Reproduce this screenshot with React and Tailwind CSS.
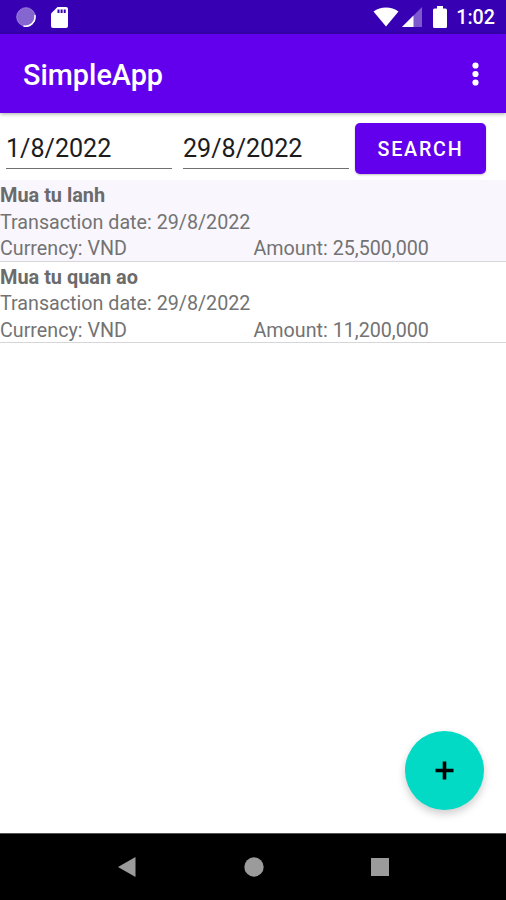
import React, { useState } from 'react';

const initialTransactions = [
  { id: 1, name: 'Mua tu lanh', date: '29/8/2022', currency: 'VND', amount: 25500000 },
  { id: 2, name: 'Mua tu quan ao', date: '29/8/2022', currency: 'VND', amount: 11200000 },
];

function StatusBar() {
  return (
    <div className="h-[34px] shrink-0 bg-[#3700b3] flex items-center justify-between pl-4 pr-[11px]">
      <div className="flex items-center">
        <svg width="20" height="20" viewBox="0 0 20 20">
          <circle cx="10" cy="10" r="9.3" fill="#8565d0" stroke="#a48bdd" strokeWidth=".8" />
          <path d="M18.8 8A9.3 9.3 0 0 1 7.5 19" fill="none" stroke="#fff" strokeWidth="1.5" />
        </svg>
        <svg className="ml-[15px]" width="17" height="21" viewBox="0 0 17 21">
          <path d="M6.5 0H15a2 2 0 0 1 2 2v17a2 2 0 0 1-2 2H2a2 2 0 0 1-2-2V6.5Z" fill="#fff" />
          <path d="M6.5 2.5h2V6h-2zM9.6 2.5h2V6h-2zM12.7 2.5h2V6h-2z" fill="#3700b3" />
        </svg>
      </div>
      <div className="flex items-center">
        <svg width="26" height="20" viewBox="0 0 26 20">
          <path d="M0.5 4.5C7.5-1 18.5-1 25.5 4.5L13 19.5Z" fill="#fff" />
        </svg>
        <svg className="ml-[3px]" width="20" height="20" viewBox="0 0 20 20">
          <path d="M20 0V20H0Z" fill="#fff" fillOpacity=".35" />
          <path d="M11.5 8.5V20H0Z" fill="#fff" />
        </svg>
        <svg className="ml-[11px]" width="14" height="22" viewBox="0 0 14 22">
          <path d="M4 0h6v2.5h2.5A1.5 1.5 0 0 1 14 4v16.5a1.5 1.5 0 0 1-1.5 1.5h-11A1.5 1.5 0 0 1 0 20.5V4a1.5 1.5 0 0 1 1.5-1.5H4Z" fill="#fff" />
        </svg>
        <span className="ml-[9px] mt-[2px] text-[19.7px] leading-none font-medium text-white">1:02</span>
      </div>
    </div>
  );
}

function AppBar() {
  return (
    <header className="relative z-10 h-[79px] shrink-0 bg-[#6200ee] flex items-center justify-between pl-[23px] pr-[27px] shadow-[0_1px_4px_rgba(0,0,0,0.35)]">
      <h1 className="mt-[3px] text-[28.8px] leading-none font-medium text-white">SimpleApp</h1>
      <button aria-label="More options">
        <svg width="7" height="24" viewBox="0 0 7 24" fill="#fff">
          <circle cx="3.5" cy="3.5" r="3.1" />
          <circle cx="3.5" cy="12" r="3.1" />
          <circle cx="3.5" cy="20.5" r="3.1" />
        </svg>
      </button>
    </header>
  );
}

function TransactionItem({ item, selected }) {
  return (
    <li className={`h-[81.5px] pt-[3px] text-[19.7px] leading-[26.5px] text-[#737373] border-b border-[#d6d6d8] ${selected ? 'bg-[#f9f7fd]' : 'bg-white'}`}>
      <div className="font-bold text-[19.9px] text-[#6b6b6b]">{item.name}</div>
      <div>Transaction date: {item.date}</div>
      <div className="grid grid-cols-2">
        <span>Currency: {item.currency}</span>
        <span className="pl-[0.5px]">Amount: {item.amount.toLocaleString('en-US')}</span>
      </div>
    </li>
  );
}

function NavigationBar() {
  return (
    <nav className="h-[67px] shrink-0 bg-black border-t border-[#555] flex items-center justify-between pl-[118px] pr-[117px]">
      <svg width="18" height="20" viewBox="0 0 18 20"><path d="M0 10L17.5 0V20Z" fill="#9b9b9b" /></svg>
      <svg width="20" height="20" viewBox="0 0 20 20"><circle cx="10" cy="10" r="9.7" fill="#9b9b9b" /></svg>
      <svg width="18" height="18" viewBox="0 0 18 18"><path d="M0 0h18v18H0z" fill="#9b9b9b" /></svg>
    </nav>
  );
}

function App() {
  const [fromDate, setFromDate] = useState('1/8/2022');
  const [toDate, setToDate] = useState('29/8/2022');
  const [transactions] = useState(initialTransactions);

  return (
    <div className="w-[506px] h-[900px] flex flex-col bg-white overflow-hidden font-['Roboto',sans-serif]">
      <StatusBar />
      <AppBar />

      <main className="relative flex-1">
        {/* Date range filter */}
        <div className="h-[67px] flex items-start pl-[6px]">
          <input
            type="text"
            aria-label="From date"
            value={fromDate}
            onChange={(e) => setFromDate(e.target.value)}
            className="mt-[14px] w-[166px] h-[42px] pt-[1px] text-[25.1px] text-[#1c1c1c] border-b border-[#707070] outline-none"
          />
          <input
            type="text"
            aria-label="To date"
            value={toDate}
            onChange={(e) => setToDate(e.target.value)}
            className="mt-[14px] ml-[11px] w-[166px] h-[42px] pt-[1px] text-[25.1px] text-[#1c1c1c] border-b border-[#707070] outline-none"
          />
          <button className="mt-[10px] ml-[6px] w-[131px] h-[51px] pt-[3px] rounded-[5px] bg-[#6200ee] text-[19.7px] font-medium tracking-[1.76px] text-white shadow-[0_1px_2px_rgba(0,0,0,0.25)]">
            SEARCH
          </button>
        </div>

        <ul>
          {transactions.map((item, index) => (
            <TransactionItem key={item.id} item={item} selected={index === 0} />
          ))}
        </ul>

        <button
          aria-label="Add transaction"
          className="absolute right-[22px] bottom-[23px] w-[79px] h-[79px] rounded-full bg-[#03dac5] flex items-center justify-center shadow-[0_4px_9px_rgba(0,0,0,0.2)]"
        >
          <svg width="19" height="19" viewBox="0 0 19 19">
            <path d="M9.5 0.5V18.5M0.5 9.5H18.5" stroke="#000" strokeWidth="3.6" />
          </svg>
        </button>
      </main>

      <NavigationBar />
    </div>
  );
}

export default App;
